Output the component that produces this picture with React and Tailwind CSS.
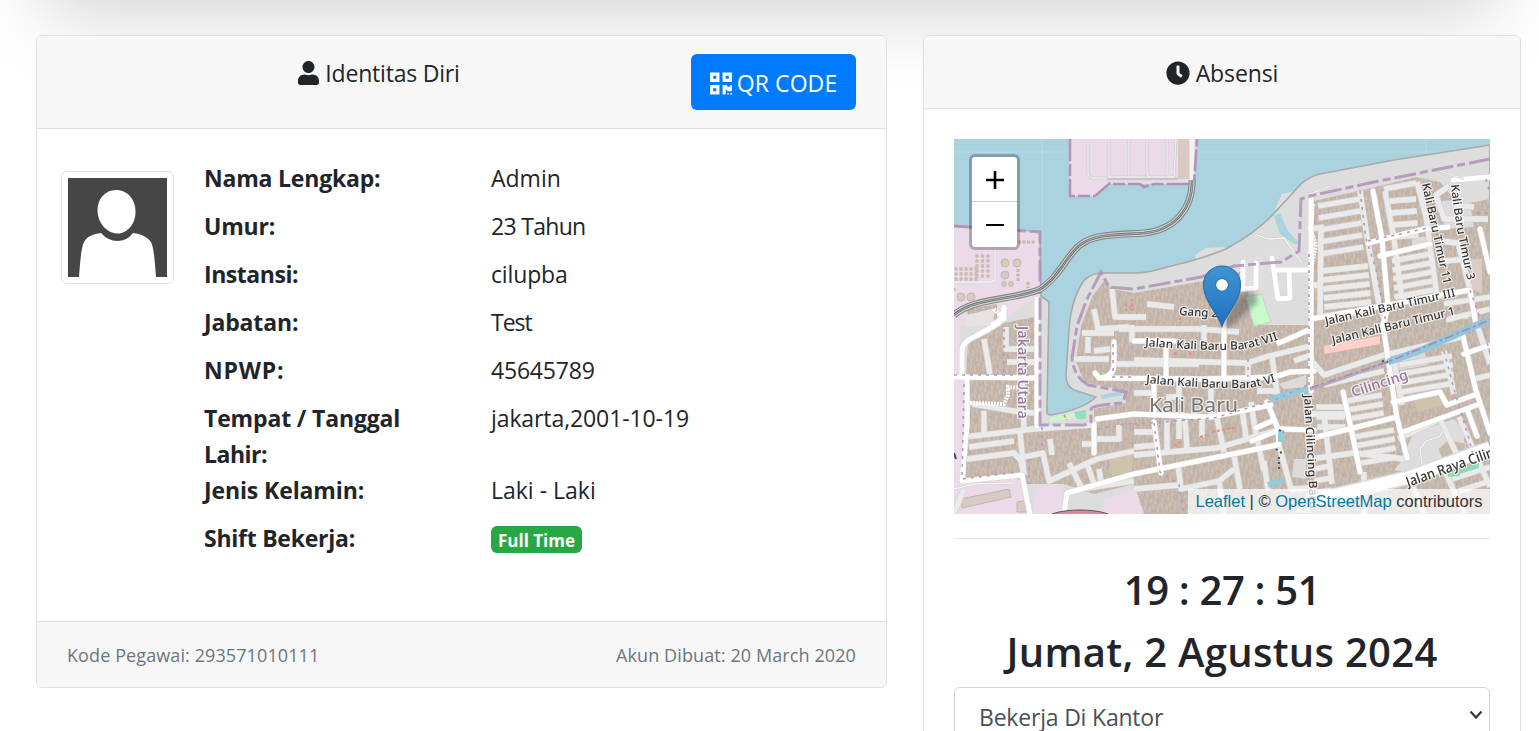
import React from "react";
import { FaUser, FaClock, FaQrcode } from "react-icons/fa";

const details = [
  ["Nama Lengkap:", "Admin", "tracking-[-0.2px]", ""],
  ["Umur:", "23 Tahun", "tracking-[-0.2px]", "tracking-[-0.7px]"],
  ["Instansi:", "cilupba", "tracking-[-0.45px]", "tracking-[-0.15px]"],
  ["Jabatan:", "Test", "tracking-[-0.15px]", "tracking-[-1px]"],
  ["NPWP:", "45645789", "tracking-[0.8px]", "tracking-[-0.2px]"],
];

const coast =
  "M536 6L440 21L366 35Q356 37 347 45L323 71Q305 92 272 110Q245 121 213 128Q195 134 180 134H147Q133 135 127 146Q117 163 115 190L112 236Q112 247 120 251L142 258Q130 270 97 276Q92 276 93 270L95 163L87 157L86 93L0 87V375H536Z";

const boundary =
  "M0 87L86 93V286H130L137 283V270Q140 266 169 264L172 253L134 246Q120 238 118 219L123 187L133 160L147 133L155 148L180 150L247 138L280 127L327 123L345 112L347 60L356 57L420 43L536 20";

const blocks = [
  "M127 187L138 158L150 142L158 150L180 154L250 142L290 132L300 186L356 186V350L340 375H190L180 345L140 355L110 345H72L60 338L12 343L14 240H84V288L140 288V270L172 264V252L130 243L122 222Z",
  "M14 204L35 194L50 184L80 178V236H12Z",
  "M360 62L430 46L462 38L486 43L505 66L536 60V375H356Z",
  "M13 170L43 165V180L15 186Z",
];

const mainRoads = [
  "M0 238L85 239", "M8 238V212Q8 203 22 197L45 184L50 170", "M13 238V285L8 342L68 336L76 375", "M83 160V287",
  "M110 375L113 354L180 335L323 306", "M140 285V314", "M160 203V225Q160 238 145 239L141 234", "M148 239L250 240L320 238L336 233L360 232",
  "M143 280L180 275L257 278L317 266", "M212 206V236", "M270 180V236", "M200 240V276", "M200 283L207 334",
  "M313 263L324 290L325 306", "M298 302L327 290L360 291", "M302 289L318 282", "M357 60V252", "M180 202H220M325 204L357 190",
  "M389 253L398 294L406 333", "M429 186L443 279L453 319", "M359 299L439 279", "M439 263L486 253L493 266L520 256",
  "M449 293L523 266", "M508 193L522 252L536 294", "M510 215L536 206", "M513 270L523 297",
  "M419 52L428 100L434 167L429 186", "M426 117L476 105", "M414 104L470 90L494 88", "M499 41L536 38", "M526 90L536 133",
  "M357 180L516 151L522 186", "M318 119L324 160L336 159L335 132M322 131H357", "M289 123V150L302 149V124", "M39 185L50 180V168",
];

const minorRoads = [
  "M10 298L80 290L138 286", "M13 320L60 314L67 322L70 336", "M66 293L70 336M70 318L89 314L95 342L143 320L180 312",
  "M0 375L10 350", "M18 265L60 272L80 274M30 272V293M68 240L70 292", "M52 188V210H80M53 223H83M30 200L36 235",
  "M15 308L60 302", "M96 300L98 316M115 324L128 350L180 342M132 322L140 345", "M128 305H143M145 330L148 349", "M165 286V300H143",
  "M180 221L293 224L315 217L357 207", "M128 194H160M140 170L144 190L175 188", "M120 220H155M140 212L156 210", "M134 198V214",
  "M158 150L161 178H192M193 165L220 168", "M165 190H245L285 193", "M158 225L245 225", "M178 186V203M250 186V204", "M225 240V258H212",
  "M180 254H200M257 250V276", "M180 293H204M180 308L206 306", "M180 316L263 309L327 290", "M213 281V312M225 280V300M231 281L233 310M248 280V298M263 279L270 313",
  "M297 263L301 290L310 332M288 270L292 298", "M325 306L337 350L356 349", "M224 325L227 350L265 342L280 330", "M280 316L286 350M310 322L314 352", "M265 342L270 375M180 350L225 346", "M318 218L324 260M340 222L357 216", "M294 224V238M303 252H325",
  "M367 87L366 180", "M406 52L414 104L424 160L432 186", "M463 43L472 78L483 157", "M431 52L440 100L448 160", "M430 50L462 44",
  "M356 146H368M356 90L370 88", "M495 47L482 56L490 80H534", "M486 102L504 104L516 151", "M490 122L514 120", "M500 66L520 68",
  "M490 165L536 158M536 170L492 181", "M356 220L370 236L430 216L508 198", "M370 246L430 232", "M440 222L448 266M490 212L500 255", "M356 275H396M370 275L378 345",
  "M356 320L400 314L450 320M410 333V375", "M456 340L470 375M490 330L510 375M498 340L536 328M505 352L536 342", "M444 300L486 280L505 320",
  "M520 240L536 236M523 186L536 225", "M505 278L536 348",
];

function rowPaths(x1, x2, start, count, step, drop) {
  return Array.from({ length: count }, (_, i) => {
    const y = start + i * step;
    return `M${x1 + i * 0.6} ${y}L${x2 + i * 0.8} ${y - drop}`;
  });
}

const rows = [
  ...rowPaths(364, 406, 67, 5, 12, 7),
  ...rowPaths(368, 414, 132, 6, 9, 5),
  ...rowPaths(436, 462, 62, 4, 12, 2),
  ...rowPaths(438, 476, 122, 5, 9, 7),
  ...rowPaths(393, 428, 262, 3, 9, 6),
  ...rowPaths(400, 440, 298, 4, 9, 7),
  ...rowPaths(446, 498, 226, 4, 9, 9),
  ...rowPaths(362, 390, 268, 3, 10, 0),
  ...rowPaths(360, 376, 330, 3, 12, 3),
];

const purpleDots = [
  "M0 236H80", "M10 245L8 340L64 333", "M50 190V238", "M159 205V238H180", "M88 288V310M75 320V345", "M143 290L180 284",
  "M180 285L260 279L318 262L356 245", "M200 284L206 333L225 345L230 375", "M294 220V238", "M355 115V250", "M406 52L412 100L422 130L432 184", "M414 102L478 88",
  "M523 74H536M532 40L536 55", "M490 180L512 165M516 151L530 190L536 215", "M490 212L500 250L515 300L520 320",
];

const tanks = [[51, 124, 4], [63, 124, 4], [51, 136, 4], [7, 158, 4], [17, 158, 4], [50, 145, 2.5], [57, 145, 2.5]];
const dots = [];
for (let r = 0; r < 5; r++) for (let c = 0; c < 3; c++) dots.push([23 + c * 5.5, 117 + r * 5]);
for (let r = 0; r < 3; r++) for (let c = 0; c < 5; c++) dots.push([2 + c * 5, 130 + r * 5]);

function MapLabel({ id, d, size, fill = "#333", children, length }) {
  return (
    <>
      <path id={id} d={d} fill="none" />
      <text fontSize={size} fill={fill} stroke="#fff" strokeWidth="2.5" strokeOpacity="0.7" paintOrder="stroke" strokeLinejoin="round" textLength={length} lengthAdjust="spacingAndGlyphs" fontWeight="500">
        <textPath href={"#" + id}>{children}</textPath>
      </text>
    </>
  );
}

function StreetMap() {
  return (
    <svg viewBox="0 0 536 375" className="block h-full w-full font-['Noto_Sans',sans-serif]">
      <defs>
        <pattern id="houses" width="17" height="15" patternUnits="userSpaceOnUse" patternTransform="rotate(-8)">
          <rect width="17" height="15" fill="#c4b6aa" />
          <path d="M2 0V5M6 2V8M10 0V4M14 3V9M3 9V14M9 8V13M13 11V15M16 0V3" stroke="#d5cbc3" strokeWidth="1" />
          <path d="M4 1V5M8 5V10M12 4V8M1 9V13M6 11V15M15 10V14" stroke="#bbab9c" strokeWidth="1" />
        </pattern>
        <filter id="soft"><feGaussianBlur stdDeviation="0.6" /></filter>
        <filter id="shade"><feGaussianBlur stdDeviation="2.5" /></filter>
        <linearGradient id="pin" x1="0" y1="0" x2="0" y2="1">
          <stop offset="0" stopColor="#3f95d2" />
          <stop offset="1" stopColor="#2070c0" />
        </linearGradient>
      </defs>
      <rect width="536" height="375" fill="#aad3df" />
      <g filter="url(#soft)">
        <path d="M0 13H536M88 0V180M472 0V60" stroke="#bfdbe3" strokeWidth="0.8" />
        <path d="M321 70L328 55L336 53L340 52L325 72ZM241 116L252 109L271 108L270 113L242 121Z" fill="#dedede" />
        <path d={coast} fill="#dddddd" stroke="#a9a9a9" strokeWidth="1.6" />
        <path d="M0 88L85 93V158L70 165L50 183L30 186H0Z" fill="#ebdbe8" />
        <path d="M0 186H6V240H12L8 342L68 338L74 375H0ZM83 350L107 343L110 375H78ZM150 360L180 350L222 344L230 375H150Z" fill="#ebdbe8" />
        <path d="M116 0V57H141L156 45H240L243 0Z" fill="#ebdbe8" />
        <path d="M134 0V36L138 39H152M155 0V38H220L222 0M175 0V38M193 0V35L196 38M213 0V35M153 40H224" fill="none" stroke="#c9c4c8" strokeWidth="2.6" />
        <path d="M134 0V36L138 39H152M155 0V38H220L222 0M175 0V38M193 0V35L196 38M213 0V35" fill="none" stroke="#f1edf0" strokeWidth="1.4" />
        <path d="M224 0H235V40H224Z" fill="#d8c9c2" />
        <path d="M238 0V42" stroke="#f4f1f3" strokeWidth="4" />
        <path d="M116 0V57H141L156 44L160 45H186L190 48L200 45H240L243 0" fill="none" stroke="#b291b7" strokeWidth="2.5" strokeDasharray="22 3 12 3" />
        {blocks.map((d, i) => <path key={i} d={d} fill="url(#houses)" />)}
        <path d="M7 360L55 350L57 358L8 369ZM63 363L76 361V373H63Z" fill="#d6cbc5" stroke="#c4b4ac" />
        <path d="M12 176L42 169L38 185L12 188Z" fill="#e6e3e2" />
        <path d="M320 77L326 74L334 92L344 103L342 106L326 95Z" fill="#aad3df" />
        <path d="M290 118H310V150L290 148Z" fill="#e1dfdf" />
        <path d="M460 293L500 280L510 290V315L470 335L440 331L446 324Z" fill="#dddddd" />
        <path d="M432 222L470 210L474 226L440 232ZM325 245L352 236V248L330 250ZM340 320H352V340L338 338Z" fill="#dcdadb" />
        <path d="M458 98H478V110H458ZM488 62L515 60L520 88L490 90Z" fill="#dedbdb" />
        <path d="M484 310L494 301L512 304L510 318L488 320Z" fill="#c8b9ad" stroke="#dddddd" />
        <path d="M460 262L488 256L490 266L464 273Z" fill="#cfc2ac" />
        <path d="M515 120H528V155L518 150Z" fill="#d9cdc6" />
        <path d="M155 320L178 314V334L158 336Z" fill="#d0c3ac" />
        <path d="M509 173H514V180H510Z" fill="#f5eaa5" />
        <path d="M370 207L426 197V205L371 215Z" fill="#ffcfca" />
        <path d="M172 165V175M178 160V172" stroke="#fa8072" strokeWidth="1.5" strokeDasharray="2 3" />
        {minorRoads.concat(rows).map((d, i) => <path key={i} d={d} fill="none" stroke="#d0cccb" strokeWidth="6.4" strokeLinejoin="round" />)}
        {minorRoads.concat(rows).map((d, i) => <path key={i} d={d} fill="none" stroke="#eaeaea" strokeWidth="5.3" strokeLinejoin="round" />)}
        <path d="M356 362L456 338L536 309" stroke="#ddd" strokeWidth="15" fill="none" />
        <path d="M356 362L456 338L536 309" stroke="#fff" strokeWidth="12" fill="none" />
        {mainRoads.map((d, i) => <path key={i} d={d} fill="none" stroke="#d8d4d3" strokeWidth="6" strokeLinejoin="round" strokeLinecap="round" />)}
        {mainRoads.map((d, i) => <path key={i} d={d} fill="none" stroke="#fff" strokeWidth="5" strokeLinejoin="round" strokeLinecap="round" />)}
        <path d="M16 264L50 265L54 256V248L66 249M40 170L48 178M359 65L356 90L362 105L357 130" fill="none" stroke="#fff" strokeWidth="4" strokeDasharray="2 1" />
        <path d="M41 106V141L37 143H0M303 96L315 100L330 99L348 124M468 325L466 310L472 302L485 298L490 290M356 55L376 47M480 30L510 40M0 350L20 345L60 344" fill="none" stroke="#cfc9cc" strokeWidth="2.3" />
        <path d="M41 106V141L37 143H0M303 96L315 100L330 99L348 124M468 325L466 310L472 302L485 298L490 290M356 55L376 47M480 30L510 40M0 350L20 345L60 344" fill="none" stroke="#f7f4f6" strokeWidth="1.3" />
        <path d="M356 250L390 239L436 222" stroke="#b5acbf" strokeWidth="3" fill="none" />
        <path d="M434 223L470 210L523 186L536 181" fill="none" stroke="#91c6dc" strokeWidth="7" />
        <path d="M317 260L354 250M327 291V303M314 346L329 341M300 360L308 370" fill="none" stroke="#91cbdc" strokeWidth="6" />
        <path d="M356 249L436 222L536 181" fill="none" stroke="#a58bb1" strokeWidth="1.6" strokeDasharray="9 3 3 3" />
        <path d="M147 256L168 252L169 256L148 260Z" fill="#aad3df" />
        <path d="M292 158L308 155L317 183L300 187Z" fill="#c8facc" />
        <path d="M292 158L308 155L309 160L317 183L300 187Z" fill="none" stroke="#c5d6c1" />
        <path d="M96 279L120 274V279L96 283Z" fill="#c8facc" />
        <path d="M120 273L132 271V280H123Z" fill="#8fdfc0" />
        <path d="M110 276L113 281M220 307L228 302M246 298L252 296M258 293L282 288M221 213V217M236 213V217M226 178V184" stroke="#f28a7c" strokeWidth="2" strokeDasharray="3 2" />
        <path d="M493 333L506 330V337L494 338ZM506 330L525 323V329L508 334Z" fill="#8fd8b9" />
        <path d="M325 291L330 293M322 310L329 315M325 318V330M428 222L434 223" stroke="#555" strokeWidth="2" strokeDasharray="2 3" />
        {purpleDots.map((d, i) => <path key={i} d={d} fill="none" stroke="#b79abc" strokeWidth="1.6" strokeDasharray="3 5" />)}
        <path d={boundary} fill="none" stroke="#af92b5" strokeOpacity="0.85" strokeWidth="3" strokeDasharray="22 4 8 4" />
        {tanks.map(([x, y, r], i) => <circle key={i} cx={x} cy={y} r={r} fill="#d5cac4" stroke="#c5b5ad" />)}
        {dots.map(([x, y], i) => <circle key={i} cx={x} cy={y} r="1.9" fill="#cbbdb5" />)}
        <path d="M64 103H82M64 130V142M74 143V149M0 152V148" stroke="#c5b5ad" strokeWidth="3" strokeDasharray="3 1.5" />
        <path d="M0 176C16 162 44 161 66 156C85 152 88 151 100 138C112 124 116 114 126 106C140 95 162 96 190 94C222 91 239 68 238 41" fill="none" stroke="#858585" strokeWidth="7" />
        <path d="M0 176C16 162 44 161 66 156C85 152 88 151 100 138C112 124 116 114 126 106C140 95 162 96 190 94C222 91 239 68 238 41" fill="none" stroke="#ced6d8" strokeWidth="4.8" />
        <path d="M0 176C16 162 44 161 66 156C85 152 88 151 100 138C112 124 116 114 126 106C140 95 162 96 190 94C222 91 239 68 238 41" fill="none" stroke="#6c6c6c" strokeWidth="2.6" />
        <path d="M0 176C16 162 44 161 66 156C85 152 88 151 100 138C112 124 116 114 126 106C140 95 162 96 190 94C222 91 239 68 238 41" fill="none" stroke="#b9bcbc" strokeWidth="0.9" />
        <ellipse cx="126" cy="381" rx="35" ry="10" fill="#e77f95" stroke="#555" />
        <path d="M0 314L2 320" stroke="#444" strokeWidth="2" />
        <MapLabel id="gang" d="M225 176L290 180" size="11.5">Gang 2</MapLabel>
        <MapLabel id="barat7" d="M191 207Q260 213 290 210Q310 206 334 197" size="11.5" length="135">Jalan Kali Baru Barat VII</MapLabel>
        <MapLabel id="barat6" d="M192 244Q260 250 295 249Q314 246 334 238" size="11.5" length="131">Jalan Kali Baru Barat VI</MapLabel>
        <MapLabel id="timur3" d="M372 186L516 154" size="11.5" length="133">Jalan Kali Baru Timur III</MapLabel>
        <MapLabel id="timur1" d="M379 205L516 172" size="11.5" length="126">Jalan Kali Baru Timur 1</MapLabel>
        <MapLabel id="timur11" d="M468 45L492 156" size="11.5" length="103">Kali Baru Timur 11</MapLabel>
        <MapLabel id="timur3b" d="M497 46Q501 88 515 148" size="11.5" length="97">Kali Baru Timur 3</MapLabel>
        <MapLabel id="cilincingb" d="M350 256L357 385" size="11.5" length="114">Jalan Cilincing Baru</MapLabel>
        <MapLabel id="raya" d="M454 348L570 307" size="14" length="118">Jalan Raya Cilincing</MapLabel>
        <MapLabel id="cilincing" d="M399 258L470 235" size="14" fill="#95779f" length="59">Cilincing</MapLabel>
        <MapLabel id="utara" d="M64 187V285" size="14" fill="#95779f" length="93">Jakarta Utara</MapLabel>
        <text x="195" y="273" fontSize="20.5" textLength="89" lengthAdjust="spacingAndGlyphs" fill="#777" stroke="#fff" strokeOpacity="0.65" strokeWidth="2.5" paintOrder="stroke">Kali Baru</text>
      </g>
      <path d="M267 188L286 156Q304 145 303 164L276 188Z" fill="#333" opacity="0.38" filter="url(#shade)" />
      <path d="M268 187.500C264 175 249.500 162 249.500 145.500A18.500 18.500 0 0 1 286.500 145.500C286.500 162 272 175 268 187.500Z" fill="url(#pin)" stroke="#2c6da5" strokeWidth="1.1" />
      <circle cx="268" cy="145.800" r="6.400" fill="#fff" stroke="#2f72ab" strokeWidth="1.1" />
    </svg>
  );
}

function Avatar() {
  return (
    <div className="h-[113px] w-[113px] rounded-[6px] border border-[#dee2e6] bg-white p-[6px]">
      <svg viewBox="0 0 99 99" className="block h-[99px] w-[99px]">
        <rect width="99" height="99" fill="#464646" />
        <path d="M48 12C60 12 67.500 22 67.500 34C67.500 46 59 55.500 50 55.500C39 55.500 29.500 45 29.500 32C29.500 21 37 12 48 12Z" fill="#fff" />
        <path d="M11 99C12 86 13 70 16 64C19 58 26 56 33 55Q40 63 49.500 63Q59 63 65 55C74 56 81 60 83.500 65C86 71 87 86 88 99Z" fill="#fff" />
      </svg>
    </div>
  );
}

export default function App() {
  return (
    <div className="relative h-[731px] w-[1539px] overflow-hidden bg-white font-['Open_Sans','Noto_Sans',sans-serif] text-[23px] leading-[36px] text-[#212529]">
      <div className="absolute inset-x-[42px] top-[-310px] h-[300px] shadow-[0_24px_72px_rgba(0,0,0,0.175)]" />
      <main className="relative flex items-start gap-[36px] pt-[35px] pl-[36px]">
        <section className="w-[851px] shrink-0 overflow-hidden rounded-[6px] border border-[#dfdfdf] bg-white">
          <header className="flex h-[93px] items-start border-b border-[#dfdfdf] bg-[#f7f7f7] px-[30px] pt-[18px]">
            <div className="flex flex-1 items-center justify-center gap-[6px] pt-px">
              <FaUser className="h-[24px] w-[21px] shrink-0" />
              <span className="tracking-[-0.2px] whitespace-nowrap">Identitas Diri</span>
            </div>
            <button className="flex h-[56px] w-[165px] items-center justify-center gap-[5px] rounded-[6px] bg-[#007bff] pt-[2px] text-white">
              <FaQrcode className="h-[25px] w-[22px] shrink-0" />
              <span className="tracking-[0.1px] whitespace-nowrap">QR CODE</span>
            </button>
          </header>
          <div className="flex h-[492px] pt-[31px] pl-[24px]">
            <div className="w-[143px] pt-[11px]"><Avatar /></div>
            <dl>
              {details.map(([label, value, labelTracking, valueTracking]) => (
                <div key={label} className="flex h-[48px]">
                  <dt className={"w-[287px] font-bold " + labelTracking}>{label}</dt>
                  <dd className={valueTracking}>{value}</dd>
                </div>
              ))}
              <div className="flex h-[72px]">
                <dt className="w-[287px] font-bold tracking-[-0.15px]">Tempat / Tanggal<br /><span className="tracking-[-0.5px]">Lahir:</span></dt>
                <dd className="tracking-[-0.1px]">jakarta,2001-10-19</dd>
              </div>
              <div className="flex h-[48px]">
                <dt className="w-[287px] font-bold tracking-[-0.12px]">Jenis Kelamin:</dt>
                <dd>Laki - Laki</dd>
              </div>
              <div className="flex h-[48px]">
                <dt className="w-[287px] font-bold tracking-[-0.25px]">Shift Bekerja:</dt>
                <dd className="pt-[6px]">
                  <span className="flex h-[27px] w-[91px] items-center justify-center rounded-[6px] bg-[#28a745] pt-[2px] text-[17px] leading-[18px] font-bold whitespace-nowrap text-white">Full Time</span>
                </dd>
              </div>
            </dl>
          </div>
          <footer className="flex h-[66px] items-center justify-between border-t border-[#dfdfdf] bg-[#f7f7f7] px-[30px] text-[18px] tracking-[0.1px] text-[#6c757d]">
            <span>Kode Pegawai: 293571010111</span>
            <span>Akun Dibuat: 20 March 2020</span>
          </footer>
        </section>
        <section className="h-[760px] w-[598px] shrink-0 overflow-hidden rounded-[6px] border border-[#dfdfdf] bg-white">
          <header className="flex h-[73px] items-center justify-center gap-[6px] border-b border-[#dfdfdf] bg-[#f7f7f7] pt-px">
            <FaClock className="h-[24px] w-[24px]" />
            <span className="tracking-[-0.1px]">Absensi</span>
          </header>
          <div className="px-[30px] pt-[30px]">
            <div className="relative h-[375px] overflow-hidden">
              <StreetMap />
              <div className="absolute top-[15px] left-[15px] flex flex-col overflow-hidden rounded-[6px] border-3 border-black/25 bg-white bg-clip-padding">
                <button aria-label="Zoom in" className="flex h-[45px] w-[45px] items-center justify-center border-b border-[#ccc]">
                  <svg viewBox="0 0 18 18" className="mt-px h-[18px] w-[18px]"><path d="M9 0V18M0 9H18" stroke="#000" strokeWidth="2.600" /></svg>
                </button>
                <button aria-label="Zoom out" className="flex h-[45px] w-[45px] items-center justify-center">
                  <svg viewBox="0 0 18 18" className="mt-px h-[18px] w-[18px]"><path d="M0 9H18" stroke="#000" strokeWidth="2" /></svg>
                </button>
              </div>
              <div className="absolute right-0 bottom-0 flex h-[25px] w-[302px] items-center justify-center bg-white/70 font-['Liberation_Sans',Arial,sans-serif] text-[16.500px] leading-[25px] whitespace-pre text-[#333]">
                <span className="text-[#0078a8]">Leaflet</span> | © <span className="text-[#0078a8]">OpenStreetMap</span> contributors
              </div>
            </div>
            <hr className="mt-[24px] border-[#e5e5e5]" />
            <div className="flex flex-col items-center pt-[26px] text-[40px] leading-[50px] font-semibold">
              <h2 className="tracking-[-0.35px] whitespace-nowrap">19 : 27 : 51</h2>
              <h2 className="mt-[12px] tracking-[0.28px] whitespace-nowrap">Jumat, 2 Agustus 2024</h2>
            </div>
            <div className="mt-[10px] flex h-[57px] items-center justify-between rounded-[6px] border border-[#ced4da] pt-[2px] pr-[6px] pl-[24px] text-[#495057]">
              <span className="tracking-[-0.2px]">Bekerja Di Kantor</span>
              <svg viewBox="0 0 14 10" className="mb-[4px] h-[10px] w-[14px]"><path d="M1.500 1.500L7 7.500L12.500 1.500" fill="none" stroke="#343a40" strokeWidth="2.200" /></svg>
            </div>
          </div>
        </section>
      </main>
    </div>
  );
}
